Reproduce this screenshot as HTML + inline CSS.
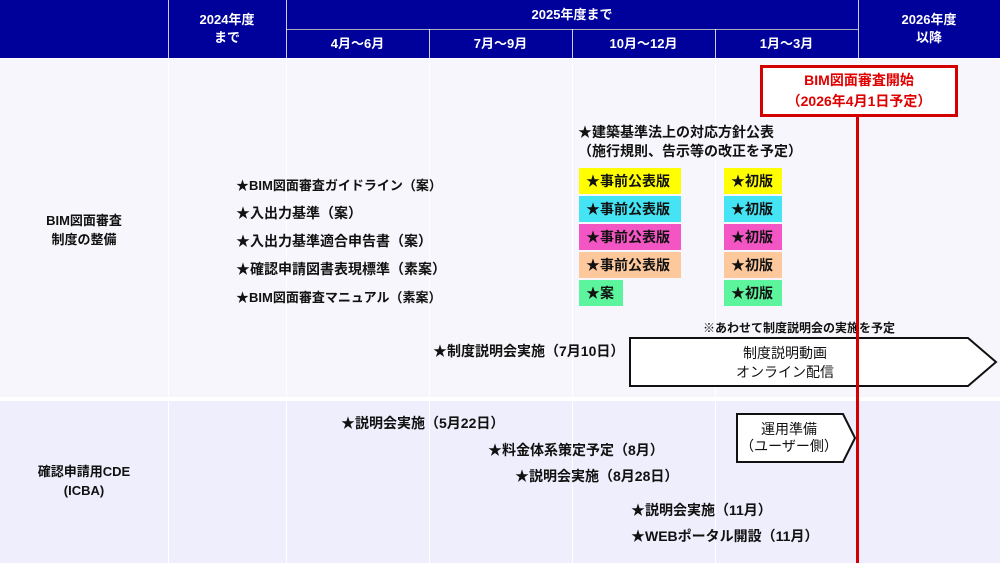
<!DOCTYPE html>
<html><head><meta charset="utf-8"><style>
*{margin:0;padding:0;box-sizing:border-box}
body{width:1000px;height:563px;position:relative;overflow:hidden;background:#fff;font-family:"Liberation Sans","Noto Sans CJK JP",sans-serif;font-weight:bold;font-size:14px;color:#111}
.a{position:absolute;white-space:nowrap}
.h{background:#00009b;color:#fff;text-align:center;position:absolute;display:flex;align-items:center;justify-content:center;line-height:1.35;font-size:13px}
.vl{position:absolute;width:1px;background:#fff;opacity:.8}
.box{position:absolute;height:26px;line-height:26px;padding-left:7px}
.c{text-align:center}
.s{font-size:13px}
</style></head><body>
<div class="h" style="left:0;top:0;width:1000px;height:58px"></div>
<div class="h" style="left:168px;top:0;width:118px;height:58px">2024年度<br>まで</div>
<div class="h" style="left:286px;top:0;width:572px;height:29px">2025年度まで</div>
<div class="h" style="left:858px;top:0;width:142px;height:58px">2026年度<br>以降</div>
<div class="h" style="left:286px;top:29px;width:143px;height:29px">4月～6月</div>
<div class="h" style="left:429px;top:29px;width:143px;height:29px">7月～9月</div>
<div class="h" style="left:572px;top:29px;width:143px;height:29px">10月～12月</div>
<div class="h" style="left:715px;top:29px;width:143px;height:29px">1月～3月</div>
<div class="a" style="left:286px;top:29px;width:572px;height:1px;background:#aab"></div>
<div class="vl" style="left:168px;top:0;height:58px"></div>
<div class="vl" style="left:286px;top:0;height:58px"></div>
<div class="vl" style="left:858px;top:0;height:58px"></div>
<div class="vl" style="left:429px;top:29px;height:29px"></div>
<div class="vl" style="left:572px;top:29px;height:29px"></div>
<div class="vl" style="left:715px;top:29px;height:29px"></div>

<div class="a" style="left:0;top:59px;width:1000px;height:338px;background:#f6f6fc"></div>
<div class="a" style="left:0;top:401px;width:1000px;height:162px;background:#eeeefc"></div>
<div class="a" style="left:168px;top:59px;width:1px;height:504px;background:#fff"></div>
<div class="a" style="left:286px;top:59px;width:1px;height:504px;background:#fff"></div>
<div class="a" style="left:429px;top:59px;width:1px;height:504px;background:#fff"></div>
<div class="a" style="left:572px;top:59px;width:1px;height:504px;background:#fff"></div>
<div class="a" style="left:715px;top:59px;width:1px;height:504px;background:#fff"></div>
<div class="a" style="left:858px;top:59px;width:1px;height:504px;background:#fff"></div>

<div class="a c s" style="left:0;top:211px;width:168px;line-height:19px">BIM図面審査<br>制度の整備</div>
<div class="a c s" style="left:0;top:462px;width:168px;line-height:19px">確認申請用CDE<br>(ICBA)</div>

<div class="a" style="left:578px;top:123px;line-height:19px">★建築基準法上の対応方針公表<br>（施行規則、告示等の改正を予定）</div>

<div class="a s" style="left:236px;top:175px">★BIM図面審査ガイドライン（案）</div>
<div class="a" style="left:236px;top:203px">★入出力基準（案）</div>
<div class="a" style="left:236px;top:231px">★入出力基準適合申告書（案）</div>
<div class="a" style="left:236px;top:259px">★確認申請図書表現標準（素案）</div>
<div class="a s" style="left:236px;top:287px">★BIM図面審査マニュアル（素案）</div>

<div class="box" style="left:579px;top:168px;width:102px;background:#ffff00">★事前公表版</div>
<div class="box" style="left:579px;top:196px;width:102px;background:#44e4f4">★事前公表版</div>
<div class="box" style="left:579px;top:224px;width:102px;background:#f455c4">★事前公表版</div>
<div class="box" style="left:579px;top:252px;width:102px;background:#fcc89c">★事前公表版</div>
<div class="box" style="left:579px;top:280px;width:44px;background:#5cf49c">★案</div>
<div class="box" style="left:724px;top:168px;width:58px;background:#ffff00">★初版</div>
<div class="box" style="left:724px;top:196px;width:58px;background:#44e4f4">★初版</div>
<div class="box" style="left:724px;top:224px;width:58px;background:#f455c4">★初版</div>
<div class="box" style="left:724px;top:252px;width:58px;background:#fcc89c">★初版</div>
<div class="box" style="left:724px;top:280px;width:58px;background:#5cf49c">★初版</div>

<div class="a" style="left:703px;top:319px;font-size:12px">※あわせて制度説明会の実施を予定</div>
<div class="a" style="left:433px;top:341px">★制度説明会実施（7月10日）</div>
<svg class="a" style="left:628px;top:336px" width="372" height="52"><polygon points="2,2 340,2 368,26 340,50 2,50" fill="#fff" stroke="#111" stroke-width="2"/></svg>
<div class="a c" style="left:630px;top:344px;width:310px;line-height:19px;font-weight:normal">制度説明動画<br>オンライン配信</div>

<div class="a" style="left:341px;top:413px">★説明会実施（5月22日）</div>
<div class="a" style="left:488px;top:440px">★料金体系策定予定（8月）</div>
<div class="a" style="left:515px;top:466px">★説明会実施（8月28日）</div>
<div class="a" style="left:631px;top:500px">★説明会実施（11月）</div>
<div class="a" style="left:631px;top:526px">★WEBポータル開設（11月）</div>
<svg class="a" style="left:736px;top:413px" width="122" height="52"><polygon points="1,1 107,1 119,25 107,49 1,49" fill="#fff" stroke="#111" stroke-width="2"/></svg>
<div class="a c" style="left:737px;top:421px;width:104px;line-height:17px;font-weight:normal">運用準備<br>（ユーザー側）</div>

<div class="a" style="left:856px;top:88px;width:3px;height:475px;background:#d40000"></div>
<div class="a c" style="left:760px;top:65px;width:198px;height:52px;border:3px solid #d40000;background:#fff;color:#e00000;line-height:21px;padding-top:2px;font-size:14px">BIM図面審査開始<br>（2026年4月1日予定）</div>
</body></html>
